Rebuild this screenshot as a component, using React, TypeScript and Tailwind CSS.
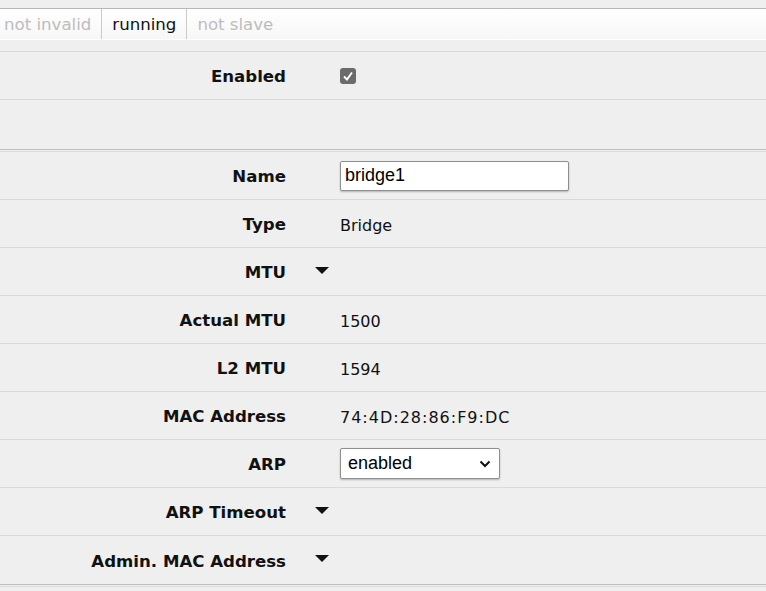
import React from 'react';

type Row = {
  label: string;
  kind: 'text' | 'input' | 'select' | 'toggle' | 'check';
  value?: string;
  wide?: boolean;
};

const ROWS: Row[] = [
  { label: 'Name', kind: 'input', value: 'bridge1' },
  { label: 'Type', kind: 'text', value: 'Bridge' },
  { label: 'MTU', kind: 'toggle' },
  { label: 'Actual MTU', kind: 'text', value: '1500' },
  { label: 'L2 MTU', kind: 'text', value: '1594' },
  { label: 'MAC Address', kind: 'text', value: '74:4D:28:86:F9:DC', wide: true },
  { label: 'ARP', kind: 'select', value: 'enabled' },
  { label: 'ARP Timeout', kind: 'toggle' },
  { label: 'Admin. MAC Address', kind: 'toggle' },
];

const Triangle: React.FC = () => (
  <svg width="14" height="8" viewBox="0 0 14 8" className="ml-[-25px] mt-[-2px]">
    <polygon points="0,0 14,0 7,7" fill="#111" />
  </svg>
);

const Field: React.FC<{ row: Row }> = ({ row }) => {
  switch (row.kind) {
    case 'input':
      return (
        <div className="w-[229px] h-[30px] bg-white border border-[#8f8f8f] rounded-[2px] shadow-[0_1px_2px_rgba(0,0,0,0.25)] flex items-center pl-[4px] text-[18px] text-black font-['Liberation_Sans',Arial,sans-serif]">
          {row.value}
        </div>
      );
    case 'select':
      return (
        <div className="w-[160px] h-[31px] bg-white border border-[#8f8f8f] rounded-[2px] shadow-[0_1px_2px_rgba(0,0,0,0.25)] flex items-center justify-between pl-[7px] pr-[8px] text-[18px] text-black font-['Liberation_Sans',Arial,sans-serif]">
          <span>{row.value}</span>
          <svg width="12" height="8" viewBox="0 0 12 8">
            <polyline points="1.5,1.5 6,6 10.5,1.5" fill="none" stroke="#111" strokeWidth="2" />
          </svg>
        </div>
      );
    case 'toggle':
      return <Triangle />;
    case 'check':
      return (
        <div className="w-4 h-4 mt-[1px] rounded-[3px] bg-[#6b6b6b] flex items-center justify-center">
          <svg width="12" height="12" viewBox="0 0 12 12">
            <polyline points="2,6.5 5,9.5 10,2.5" fill="none" stroke="#fff" strokeWidth="2" />
          </svg>
        </div>
      );
    default:
      return (
        <span className={`text-[16px] text-[#111] pt-[4px] ${row.wide ? 'tracking-[1px]' : ''}`}>{row.value}</span>
      );
  }
};

const Label: React.FC<{ text: string }> = ({ text }) => (
  <div className="w-[286px] shrink-0 text-right font-bold text-[16.6px] text-[#111] pt-[4px]">{text}</div>
);

const FormRow: React.FC<{ row: Row; last?: boolean }> = ({ row, last }) => (
  <div className={`flex items-center h-[48px] ${last ? '' : 'border-b border-[#d9d9d9]'}`}>
    <Label text={row.label} />
    <div className="ml-[54px] flex items-center">
      <Field row={row} />
    </div>
  </div>
);

export default function App() {
  return (
    <div className="w-[766px] h-[591px] overflow-hidden bg-[#efefef] font-['DejaVu_Sans',Verdana,sans-serif]">
      <div className="h-2" />
      <div className="h-[32px] border-t border-[#b8b8b8] border-b border-b-white bg-gradient-to-b from-white to-[#f7f7f7] flex text-[16.6px]">
        <div className="pl-[4px] pr-[10px] pt-[3px] flex items-center text-[#bdbdbd] border-r border-[#cacaca]">not invalid</div>
        <div className="px-[10px] pt-[3px] flex items-center text-[#111] border-r border-[#cacaca]">running</div>
        <div className="px-[10px] pt-[3px] flex items-center text-[#bdbdbd]">not slave</div>
      </div>
      <div className="h-[12px] border-b border-[#d9d9d9]" />
      <div className="h-[48px] flex items-center border-b border-[#d9d9d9]">
        <Label text="Enabled" />
        <div className="ml-[54px]">
          <Field row={{ label: 'Enabled', kind: 'check' }} />
        </div>
      </div>
      <div className="h-[50px] border-b border-[#bdbdbd]" />
      <div className="h-px bg-[#efefef]" />
      <div className="border-t border-[#dadada]">
        {ROWS.map((row, i) => (
          <FormRow key={row.label} row={row} last={i === ROWS.length - 1} />
        ))}
      </div>
      <div className="border-t border-[#bdbdbd]" />
      <div className="h-px" />
      <div className="border-t border-[#dadada]" />
    </div>
  );
}
